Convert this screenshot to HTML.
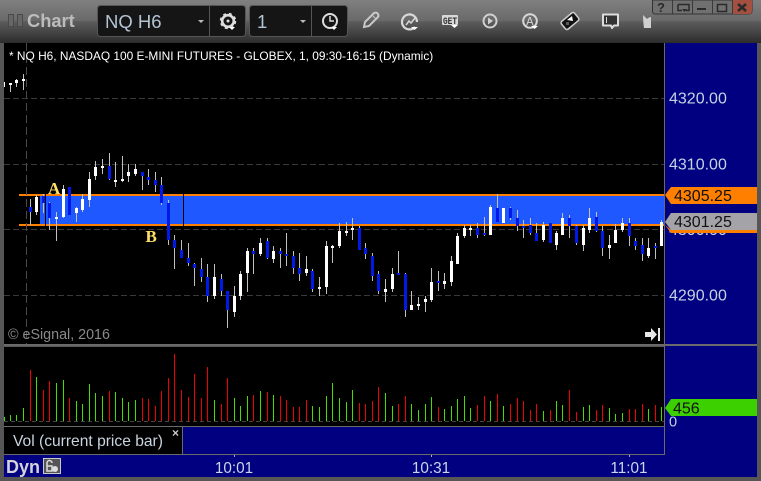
<!DOCTYPE html>
<html><head><meta charset="utf-8"><style>
html,body{margin:0;padding:0;background:#555;width:761px;height:481px;overflow:hidden}
svg{display:block}
text{font-family:"Liberation Sans",sans-serif}
</style></head><body>
<svg xmlns="http://www.w3.org/2000/svg" width="761" height="481" viewBox="0 0 761 481">
<defs>
<linearGradient id="t1" x1="0" y1="0" x2="0" y2="1"><stop offset="0" stop-color="#808080"/><stop offset="1" stop-color="#696969"/></linearGradient>
<linearGradient id="t2" x1="0" y1="0" x2="0" y2="1"><stop offset="0" stop-color="#5e5e5e"/><stop offset="1" stop-color="#2c2c2c"/></linearGradient>
</defs>
<rect width="761" height="481" fill="#565656"/>
<rect width="761" height="21" fill="url(#t1)"/>
<rect y="21" width="761" height="22" fill="url(#t2)"/>
<rect x="4" y="43" width="660" height="302" fill="#000"/>
<rect x="665" y="43" width="92" height="434" fill="#000080"/>
<rect x="4" y="347" width="660" height="79" fill="#000"/>
<rect x="4" y="427" width="178" height="27" fill="#000"/>
<rect x="183" y="427" width="481" height="27" fill="#000080"/>
<rect x="4" y="455" width="753" height="22" fill="#000080"/>
<g shape-rendering="crispEdges">
<rect x="40" y="196" width="624" height="28" fill="#2058ff"/>
<rect x="19" y="194" width="645" height="2" fill="#ff8000"/>
<rect x="19" y="224" width="645" height="2" fill="#ff8000"/>
<rect x="45" y="194" width="1" height="32" fill="#000"/>
<rect x="183" y="194" width="1" height="32" fill="#000"/>
<path d="M4 98.5H664M4 164.5H664M4 229.5H664M4 295.5H664" stroke="#3a3a3a" stroke-dasharray="6 3" fill="none"/>
<path d="M26.5 43V345" stroke="#4a4a4a" stroke-dasharray="8 4" fill="none"/>
<path stroke="#c0c0c0" fill="none" d="M10.5 83V92M16.5 79V87M23.5 74V90M30.5 199V225M36.5 195V215M43.5 194V213M49.5 202V230M56.5 212V241M63.5 185V218M76.5 207V222M82.5 194V212M89.5 172V207M95.5 161V180M102.5 159V174M109.5 153V180M115.5 162V187M122.5 156V182M128.5 164V182M135.5 164V176M142.5 172V190M148.5 169V185M155.5 172V192M161.5 177V205M168.5 200V245M174.5 235V269M181.5 240V258M188.5 243V266M194.5 263V286M201.5 258V282M207.5 264V302M214.5 264V299M221.5 274V296M227.5 291V328M234.5 286V317M240.5 271V300M247.5 248V292M253.5 248V274M260.5 238V256M267.5 238V259M273.5 246V263M280.5 248V268M286.5 233V266M293.5 251V274M299.5 253V281M306.5 256V276M312.5 269V292M319.5 277V296M326.5 241V294M332.5 245V263M339.5 223V248M346.5 222V236M352.5 218V240M359.5 226V250M365.5 243V259M372.5 253V281M378.5 271V294M385.5 279V302M392.5 268V292M398.5 251V275M405.5 273V317M411.5 291V310M418.5 297V310M425.5 296V312M431.5 268V302M438.5 271V291M444.5 273V289M451.5 256V286M457.5 233V264M464.5 225V238M470.5 225V236M477.5 223V238M484.5 217V236M490.5 205V235M497.5 194V222M510.5 207V220M517.5 210V231M523.5 220V238M530.5 218V235M536.5 223V241M543.5 222V242M550.5 223V243M556.5 231V250M562.5 213V235M569.5 215V238M576.5 225V245M583.5 225V251M589.5 208V233M596.5 212V232M602.5 226V256M609.5 235V259M615.5 224V243M622.5 218V232M629.5 218V246M635.5 238V250M642.5 238V261M648.5 238V258M655.5 243V259M661.5 220V246"/>
<path fill="#fff" d="M4 82h1V87h-1zM9 83h3V85h-3zM15 80h3V83h-3zM22 79h3V81h-3zM35 197h3V212h-3zM55 217h3V219h-3zM62 189h3V217h-3zM75 208h3V213h-3zM81 199h3V210h-3zM88 179h3V200h-3zM94 167h3V176h-3zM101 166h3V168h-3zM114 180h3V182h-3zM121 179h3V181h-3zM127 172h3V176h-3zM134 169h3V174h-3zM213 277h3V296h-3zM233 296h3V312h-3zM239 274h3V296h-3zM246 251h3V273h-3zM259 243h3V254h-3zM272 251h3V259h-3zM305 269h3V273h-3zM318 287h3V289h-3zM325 246h3V287h-3zM331 246h3V248h-3zM338 231h3V246h-3zM345 231h3V233h-3zM351 228h3V230h-3zM384 289h3V292h-3zM391 274h3V289h-3zM410 305h3V310h-3zM417 304h3V306h-3zM424 299h3V302h-3zM430 282h3V300h-3zM443 281h3V284h-3zM450 261h3V282h-3zM456 236h3V264h-3zM463 228h3V236h-3zM469 228h3V230h-3zM489 207h3V235h-3zM502 208h3V223h-3zM542 225h3V240h-3zM555 233h3V245h-3zM561 218h3V235h-3zM582 228h3V245h-3zM588 218h3V230h-3zM608 245h3V248h-3zM614 230h3V243h-3zM621 223h3V230h-3zM647 248h3V256h-3zM660 222h3V246h-3z"/>
<path fill="#0018e8" d="M29 207h3V212h-3zM42 196h3V203h-3zM48 203h3V218h-3zM68 187h3V215h-3zM108 166h3V179h-3zM141 172h3V176h-3zM147 177h3V180h-3zM154 180h3V185h-3zM160 185h3V203h-3zM167 203h3V240h-3zM173 240h3V248h-3zM180 250h3V258h-3zM187 258h3V263h-3zM193 264h3V268h-3zM200 269h3V277h-3zM206 277h3V296h-3zM220 279h3V291h-3zM226 291h3V310h-3zM252 251h3V254h-3zM266 241h3V258h-3zM279 251h3V254h-3zM285 254h3V256h-3zM292 256h3V268h-3zM298 268h3V274h-3zM311 271h3V289h-3zM358 228h3V250h-3zM364 248h3V254h-3zM371 256h3V276h-3zM377 274h3V291h-3zM397 273h3V275h-3zM404 274h3V310h-3zM437 281h3V283h-3zM476 228h3V235h-3zM483 233h3V235h-3zM496 208h3V222h-3zM509 208h3V218h-3zM516 218h3V226h-3zM522 226h3V228h-3zM529 225h3V233h-3zM535 233h3V241h-3zM549 223h3V243h-3zM568 218h3V226h-3zM575 226h3V243h-3zM595 217h3V231h-3zM601 231h3V248h-3zM628 223h3V236h-3zM634 241h3V246h-3zM641 245h3V254h-3zM654 246h3V248h-3z"/>
<path d="M4 421.5H664" stroke="#444" stroke-dasharray="4 3" fill="none"/>
<path stroke="#44dd00" fill="none" d="M4.5 421V417M10.5 421V415M16.5 421V415M23.5 421V408M36.5 421V377M56.5 421V383M63.5 421V380M76.5 421V401M82.5 421V404M89.5 421V384M95.5 421V393M102.5 421V396M115.5 421V392M122.5 421V398M128.5 421V402M135.5 421V400M214.5 421V400M234.5 421V398M240.5 421V406M247.5 421V396M260.5 421V391M273.5 421V395M312.5 421V406M319.5 421V407M326.5 421V396M332.5 421V383M339.5 421V398M346.5 421V402M352.5 421V390M385.5 421V393M392.5 421V406M411.5 421V404M418.5 421V410M425.5 421V404M431.5 421V397M444.5 421V409M451.5 421V406M457.5 421V399M464.5 421V396M470.5 421V408M490.5 421V401M503.5 421V406M543.5 421V411M556.5 421V401M562.5 421V405M583.5 421V407M589.5 421V405M609.5 421V408M615.5 421V414M622.5 421V413M648.5 421V409M661.5 421V407"/>
<path stroke="#f00000" fill="none" d="M30.5 421V370M43.5 421V390M49.5 421V381M69.5 421V398M109.5 421V391M142.5 421V398M148.5 421V399M155.5 421V406M161.5 421V391M168.5 421V378M174.5 421V354M181.5 421V390M188.5 421V397M194.5 421V374M201.5 421V398M207.5 421V367M221.5 421V404M227.5 421V378M253.5 421V395M267.5 421V392M280.5 421V396M286.5 421V400M293.5 421V407M299.5 421V407M306.5 421V400M359.5 421V403M365.5 421V404M372.5 421V401M378.5 421V387M398.5 421V404M405.5 421V396M438.5 421V407M477.5 421V405M484.5 421V396M497.5 421V394M510.5 421V404M517.5 421V398M523.5 421V401M530.5 421V410M536.5 421V404M550.5 421V410M569.5 421V390M576.5 421V412M596.5 421V410M602.5 421V405M629.5 421V409M635.5 421V409M642.5 421V404M655.5 421V405"/>
<rect x="4" y="344" width="753" height="2" fill="#6a6a6a"/>
<rect x="664" y="43" width="1" height="412" fill="#6a6a6a"/>
<rect x="4" y="426" width="661" height="1" fill="#6a6a6a"/>
<rect x="182" y="426" width="1" height="28" fill="#6a6a6a"/>
<rect x="4" y="454" width="661" height="1" fill="#6a6a6a"/>
<path d="M234.5 455v2M431.5 455v2M629.5 455v2" stroke="#aaa" fill="none"/>
</g>

<!-- header -->
<text x="9" y="60" font-size="11.9" fill="#fff">* NQ H6, NASDAQ 100 E-MINI FUTURES - GLOBEX, 1, 09:30-16:15 (Dynamic)</text>
<text x="8" y="339" font-size="14.3" fill="#8a8a8a">© eSignal, 2016</text>
<text x="48" y="194" font-size="17" font-weight="bold" fill="#ffe066" style="font-family:'Liberation Serif',serif">A</text>
<text x="145.500" y="242" font-size="17" font-weight="bold" fill="#ffe066" style="font-family:'Liberation Serif',serif">B</text>
<path d="M645 332h6v-4l6 6.500-6 6.500v-4h-6z" fill="#e8e8e8"/><rect x="658" y="328" width="2" height="13" fill="#e8e8e8"/>

<!-- axis -->
<g font-size="16" fill="#c4d4e4">
<text x="669" y="103.500">4320.00</text>
<text x="669" y="169.500">4310.00</text>
<text x="669" y="235">4300.00</text>
<text x="669" y="300.500">4290.00</text>
</g>
<path d="M665 195L671 187H757V204H671Z" fill="#ff8000"/>
<path d="M665 225L671 230H757V233H671Z" fill="#ff8000"/>
<path d="M665 222L671 213H757V230H671Z" fill="#a4a4a8"/>
<g font-size="16" fill="#111">
<text x="674" y="201">4305.25</text>
<text x="674" y="227">4301.25</text>
</g>
<path d="M665 408L671 399H757V416H671Z" fill="#3dd000"/>
<text x="673" y="413.500" font-size="16" fill="#111">456</text>
<text x="669" y="426.500" font-size="14.500" fill="#c4d4e4">0</text>

<!-- bottom -->
<text x="13" y="446" font-size="15.6" fill="#c8d4e0">Vol (current price bar)</text>
<text x="172" y="437" font-size="12" font-weight="bold" fill="#ccc">×</text>
<text x="6" y="473" font-size="18" font-weight="bold" fill="#d4d4d8">Dyn</text>
<rect x="43.500" y="458.500" width="17" height="15" fill="#555" stroke="#c8c8c8"/>
<path d="M47 466v-3a2.500 2.500 0 0 1 5 0M47 466h5v5h-5z" fill="none" stroke="#ddd" stroke-width="1.500"/>
<circle cx="55" cy="469" r="3" fill="#ddd"/>
<g font-size="15.3" fill="#c8d8e8" text-anchor="middle">
<text x="234" y="473">10:01</text>
<text x="431" y="473">10:31</text>
<text x="629" y="473">11:01</text>
</g>

<!-- title bar -->
<rect x="8.500" y="14.500" width="5" height="12" fill="#666" stroke="#4a4a4a"/>
<rect x="17.500" y="14.500" width="5" height="12" fill="#666" stroke="#4a4a4a"/>
<text x="27" y="27" font-size="18.300" font-weight="bold" fill="#bcbcbc">Chart</text>
<rect x="97.500" y="5.500" width="148" height="31" rx="3" fill="#151515" stroke="#555"/>
<rect x="249.500" y="5.500" width="98" height="31" rx="3" fill="#151515" stroke="#555"/>
<path d="M209.500 6V36M311.500 6V36" stroke="#555" fill="none"/>
<text x="105" y="28" font-size="18.500" fill="#b4c4d4">NQ H6</text>
<text x="257" y="28" font-size="18.500" fill="#b4c4d4">1</text>
<path d="M198 20h6l-3 3zM300 20h6l-3 3z" fill="#bbb"/>
<!-- gear -->
<circle cx="228" cy="21" r="5.800" fill="none" stroke="#ddd" stroke-width="2.600"/>
<circle cx="228" cy="21" r="7.500" fill="none" stroke="#ddd" stroke-width="1.500" stroke-dasharray="3 3"/>
<circle cx="228" cy="21" r="1.500" fill="#ddd"/>
<path d="M229 27h6l-3 3z" fill="#fff"/>
<!-- clock -->
<circle cx="330" cy="21" r="7" fill="none" stroke="#ddd" stroke-width="2"/>
<path d="M330 16v5h4" fill="none" stroke="#ddd" stroke-width="1.500"/>
<path d="M331 27h6l-3 3z" fill="#fff"/>
<!-- pencil -->
<path d="M364 27l1-5 9-9q3-1 4 1t0 3l-9 9z" fill="none" stroke="#c8c8c8" stroke-width="2"/>
<path d="M372 15l4 4" stroke="#c8c8c8" fill="none"/>
<!-- chart circle -->
<path d="M416 28a7.500 7.500 0 1 1 2-5" fill="none" stroke="#d8d8d8" stroke-width="2.200" transform="translate(-1 -1)"/>
<path d="M406 25l3-4 2 2 4-5" fill="none" stroke="#d8d8d8" stroke-width="1.500"/>
<path d="M411 27h7l-3.500 3z" fill="#fff"/>
<!-- GET -->
<rect x="442" y="15" width="16" height="10" rx="1" fill="#d8d8d8"/>
<text x="443" y="24" font-size="10" font-weight="bold" fill="#333" style="font-family:'Liberation Mono',monospace" textLength="14" lengthAdjust="spacingAndGlyphs">GET</text>
<path d="M451 25h7l-3.500 3z" fill="#fff"/>
<!-- play -->
<circle cx="490" cy="21" r="6.500" fill="none" stroke="#d0d0d0" stroke-width="2"/>
<path d="M488 17.500l5 3.500-5 3.500z" fill="#d0d0d0"/>
<!-- A -->
<circle cx="530" cy="21" r="6.800" fill="none" stroke="#d8d8d8" stroke-width="2"/>
<text x="526" y="25.500" font-size="11.500" fill="#d8d8d8">A</text>
<path d="M531 26h7l-3.500 3z" fill="#fff"/>
<!-- diamond -->
<rect x="561.500" y="16" width="17" height="10" rx="2" fill="#111" stroke="#ccc" stroke-width="1.500" transform="rotate(-40 570 21)"/>
<path d="M567 20l5-4 1 5z" fill="#fff"/><rect x="566" y="22" width="3" height="3" fill="#fff" opacity=".3"/>
<!-- bubble -->
<path d="M603 14.500h15v11h-4l-2 2.500-1-2.500h-8z" fill="#333" stroke="#ddd" stroke-width="2" stroke-linejoin="round"/>
<rect x="606" y="17" width="1" height="6" fill="#ddd"/>
<!-- bird -->
<path d="M643 15l4 4 1-1 3-1v11h-7q-1-7-1-13z" fill="#d0d0d0"/>
<!-- window buttons -->
<path d="M652.500 0V11q0 3 3 3H749q3 0 3-3V0z" fill="#707070" stroke="#333"/>
<path d="M732 0h20V11q0 3-3 3H732z" fill="#a35040"/>
<path d="M672.500 0V14M692.500 0V14M712.500 0V14M732.500 0V14" stroke="#3a3a3a" fill="none"/>
<text x="657" y="12" font-size="13" font-weight="bold" fill="#2a2a2a">?</text>
<path d="M678 4.500h11v6h-3M678 4.500v6h4" fill="none" stroke="#2a2a2a" stroke-width="1.500"/><path d="M682 9h5l-2.500 3z" fill="#2a2a2a"/>
<rect x="697" y="8" width="9" height="2" fill="#2a2a2a"/>
<rect x="717.500" y="4.500" width="9" height="7" fill="none" stroke="#2a2a2a" stroke-width="1.500"/>
<path d="M738 4l8 7M746 4l-8 7" stroke="#2a2a2a" stroke-width="2.500" fill="none"/>
</svg>
</body></html>
